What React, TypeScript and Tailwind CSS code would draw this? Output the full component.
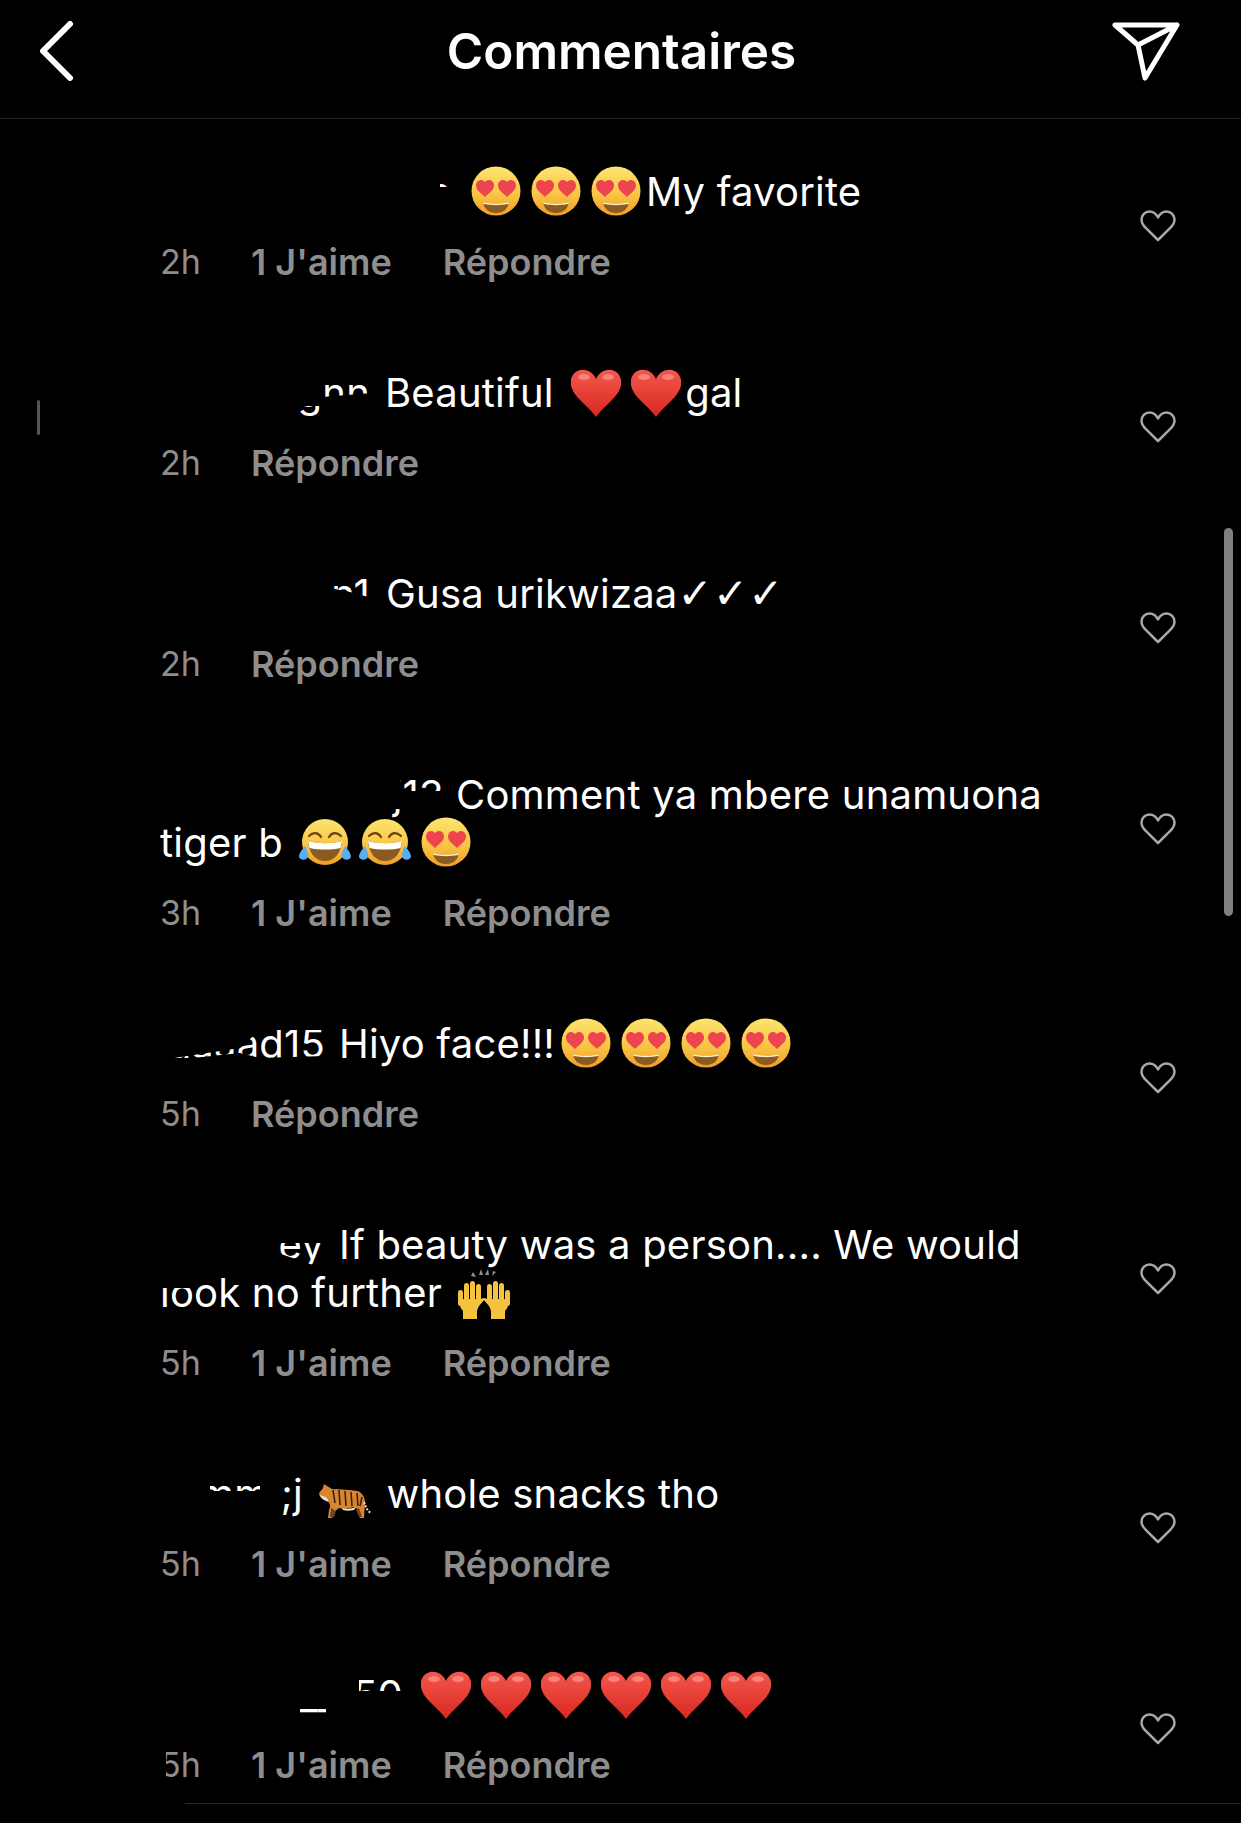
import React from "react";

type EmojiProps = { className?: string };

const HeartEyes = ({ className = "mr-[10px]" }: EmojiProps) => (
  <svg viewBox="0 0 50 50" className={`inline-block w-[50px] h-[50px] -my-2 align-[-2px] ${className}`}>
    <defs>
      <linearGradient id="faceFill" x1="0" y1="0" x2="0" y2="1">
        <stop offset="0%" stopColor="#fce56f" />
        <stop offset="60%" stopColor="#f9c242" />
        <stop offset="100%" stopColor="#ef9d27" />
      </linearGradient>
    </defs>
    <circle cx="25" cy="25" r="24.500" fill="url(#faceFill)" />
    <path d="M14 16c-3-4-9-2-9 3.500 0 5 6 8 9 11.500 3-3.500 9-6.500 9-11.500 0-5.500-6-7.500-9-3.500z" fill="#ee4450" />
    <path d="M36 16c-3-4-9-2-9 3.500 0 5 6 8 9 11.500 3-3.500 9-6.500 9-11.500 0-5.500-6-7.500-9-3.500z" fill="#ee4450" />
    <path d="M12 36c8 2 18 2 26 0-1 7-6 11-13 11s-12-4-13-11z" fill="#8a5a20" />
    <path d="M12 36c8 2 18 2 26 0l-.5 2c-8 1.500-17 1.500-25 0z" fill="#fff3c9" />
  </svg>
);

const JoyFace = ({ className = "" }: EmojiProps) => (
  <svg viewBox="0 0 54 50" className={`inline-block w-[54px] h-[50px] mr-[6px] -my-2 align-[-2px] ${className}`}>
    <circle cx="27" cy="25" r="23" fill="url(#faceFill)" />
    <path d="M11 19c4-4 9-4 12 1M31 20c3-5 8-5 12-1" fill="none" stroke="#6b4314" strokeWidth="2.200" strokeLinecap="round" />
    <path d="M10 24c10 3 24 3 34 0-1 13-8 20-17 20s-16-7-17-20z" fill="#8a5a20" />
    <path d="M10 24c10 3 24 3 34 0l-1.500 7c-9 2-22 2-31 0z" fill="#ffffff" />
    <path d="M7 29c-3 4-6 7-6 11 1 3 7 4 9 0 1-3-1-7-3-11zM47 29c3 4 6 7 6 11-1 3-7 4-9 0-1-3 1-7 3-11z" fill="#5aaef0" />
  </svg>
);

const RedHeart = ({ className = "mr-[10px]" }: EmojiProps) => (
  <svg viewBox="0 0 50 48" className={`inline-block w-[50px] h-[48px] -my-2 align-[-2px] ${className}`}>
    <defs>
      <linearGradient id="heartFill" x1="0" y1="0" x2="0" y2="1">
        <stop offset="0%" stopColor="#f4574d" />
        <stop offset="100%" stopColor="#d8281f" />
      </linearGradient>
    </defs>
    <path d="M25 10C22 3 15 0 9 1 2 3-1 9 0 16c1 6 5 11 10 16 5 5 11 10 15 16 4-6 10-11 15-16 5-5 9-10 10-16 1-7-2-13-9-15-6-1-13 2-16 9z" fill="url(#heartFill)" />
    <ellipse cx="13" cy="8" rx="6" ry="3" fill="#fa9a90" opacity="0.700" />
    <ellipse cx="37" cy="8" rx="6" ry="3" fill="#fa9a90" opacity="0.700" />
  </svg>
);

const RaisedHands = () => (
  <svg viewBox="0 0 54 50" className="inline-block w-[54px] h-[50px] ml-[4px] -my-2 align-[-4px]">
    <path d="M16 3l3 5-5-1zM24 0l2 6-4 0zM31 0l1 6-4 0zM39 3l-4 4 1-5z" fill="#8f8f8f" />
    <g fill="#f5c23e">
      <rect x="1" y="21" width="5" height="16" rx="2.500" />
      <rect x="7" y="14" width="5" height="20" rx="2.500" />
      <rect x="13" y="12" width="5" height="20" rx="2.500" />
      <rect x="19" y="15" width="5" height="18" rx="2.500" />
      <path d="M2 30h22l2-1 2 1-6 7c-1 2-2 4-2 6v7H6v-8c-3-3-4-8-4-12z" />
    </g>
    <g fill="#f5c23e" transform="translate(54 0) scale(-1 1)">
      <rect x="1" y="21" width="5" height="16" rx="2.500" />
      <rect x="7" y="14" width="5" height="20" rx="2.500" />
      <rect x="13" y="12" width="5" height="20" rx="2.500" />
      <rect x="19" y="15" width="5" height="18" rx="2.500" />
      <path d="M2 30h22l2-1 2 1-6 7c-1 2-2 4-2 6v7H6v-8c-3-3-4-8-4-12z" />
    </g>
  </svg>
);

const Tiger = () => (
  <svg viewBox="0 0 54 34" className="inline-block w-[54px] h-[34px] -my-2 align-[-2px]">
    <path d="M1 9l4-5 1-4 3 2 5 3c9 0 18 1 25 2 5 1 8 6 8 12l-1 15h-4l-2-9-5-2c-5 2-9 2-14 1l-5 4-2 6h-4l1-8c2-3 1-6-1-9-3-1-7-3-9-8z" fill="#d9852f" />
    <path d="M1 10c2 2 5 2 8 4l2 4c-4-1-8-3-10-8zM24 24c5 1 9 1 14-1l-2 3c-4 1-8 1-11 0z" fill="#eee0c6" />
    <path d="M15 6l2 13M21 6l1 15M27 7l1 15M33 8l1 14M39 9l1 13M44 13l-2 9" stroke="#3a2211" strokeWidth="1.600" fill="none" />
    <path d="M46 18c2 5 3 9 7 11" stroke="#e8dcc6" strokeWidth="2" fill="none" strokeDasharray="2 1.500" />
    <path d="M13 24l-1 9h4l2-6zM41 24l3 9h-3l-3-7z" fill="#6a4624" />
  </svg>
);

const HeartOutline = () => (
  <svg viewBox="0 0 36 32" className="w-9 h-8 fill-none stroke-[#a8a8a8] stroke-[2.500]">
    <path d="M18 7.500C16 3.500 13 1.500 9.500 1.500 5 1.500 1.500 5 1.500 9.700c0 3.400 1.800 5.800 4.500 8.500L18 30l12-11.800c2.700-2.700 4.500-5.100 4.500-8.500 0-4.700-3.500-8.200-8-8.200-3.500 0-6.500 2-8.500 6z" strokeLinejoin="round" />
  </svg>
);

const Meta = ({ time, liked, cutTime }: { time: string; liked?: boolean; cutTime?: boolean }) => (
  <div className="flex gap-[51px] mt-[22px] h-12 leading-[48px] text-[36px] text-[#8e8e8e]">
    <span className={cutTime ? "w-[40px] text-[34px] [clip-path:inset(0_0_0_6px)]" : "w-[40px] text-[34px]"}>{time}</span>
    {liked && <span className="font-semibold">1 J'aime</span>}
    <span className="font-semibold">Répondre</span>
  </div>
);

const Row = ({ children, time, liked, cutTime, last }: { children: React.ReactNode; time: string; liked?: boolean; cutTime?: boolean; last?: boolean }) => (
  <div className={last ? "flex items-start pl-[160px] pt-11 pb-[14px]" : "flex items-start pl-[160px] pt-11 pb-[39px]"}>
    <div className="w-[900px] shrink-0">
      <p className="leading-[48px] text-[40px] tracking-[0.2px] text-white">{children}</p>
      <Meta time={time} liked={liked} cutTime={cutTime} />
    </div>
    <div className="ml-[80px] mt-[42px]">
      <HeartOutline />
    </div>
  </div>
);

export default function App() {
  return (
    <div className="relative h-[1823px] overflow-hidden bg-black font-['Inter',sans-serif]">
      <header className="flex items-center h-[119px] pl-[37px] pr-[60px] border-b border-[#262626]">
        <svg viewBox="0 0 38 60" className="w-[38px] h-[60px] fill-none stroke-white stroke-[6] -mt-4" strokeLinecap="round" strokeLinejoin="round">
          <path d="M33 3 6 30l27 27" />
        </svg>
        <h1 className="flex-1 pl-[57px] text-center text-[49.5px] font-semibold text-white -mt-4">Commentaires</h1>
        <svg viewBox="0 0 70 60" className="w-[70px] h-[60px] fill-none stroke-white stroke-[5] -mt-4" strokeLinejoin="round" strokeLinecap="round">
          <path d="M4 4h62L34 57 27 24 4 4zM27 24 66 4" />
        </svg>
      </header>

      <main className="pt-[5px]">
        <Row time="2h" liked>
          {/* redacted usernames: only slivers of the text are left */}
          <span className="inline-block w-[311px] text-right whitespace-nowrap pr-[20px] [clip-path:polygon(280px_14px,292px_14px,292px_19px,280px_19px)]">ann</span>
          <HeartEyes />
          <HeartEyes />
          <HeartEyes className="mr-[5px]" />
          My favorite
        </Row>
        <Row time="2h">
          <span className="inline-block w-[225px] text-right whitespace-nowrap pr-[15px] [clip-path:polygon(162px_0,212px_0,212px_24px,162px_28px,162px_37px,162px_48px,138px_48px,138px_37px,162px_37px)]">gnn</span>
          Beautiful <RedHeart className="ml-[6px] mr-[10px]" />
          <RedHeart className="mr-[4px]" />
          gal
        </Row>
        <Row time="2h">
          <span className="inline-block w-[226px] text-right whitespace-nowrap pr-[16px] [clip-path:polygon(170px_0,212px_0,212px_28px,190px_22px,170px_18px)]">an1</span>
          Gusa urikwizaa<span className="font-['DejaVu_Sans',sans-serif] text-[42px] leading-none">✓✓✓</span>
        </Row>
        <Row time="3h" liked>
          <span className="inline-block w-[296px] text-right whitespace-nowrap pr-[12px] [clip-path:polygon(240px_0,290px_0,290px_20px,240px_20px,240px_38px,216px_38px,216px_48px,240px_48px,240px_20px)]">j13</span>
          Comment ya mbere unamuona tiger b <JoyFace className="ml-[4px]" />
          <JoyFace />
          <HeartEyes className="ml-[3px]" />
        </Row>
        <Row time="5h">
          <span className="inline-block w-[179px] text-right whitespace-nowrap pr-[14px] [clip-path:polygon(14px_38px,80px_28px,100px_10px,165px_10px,165px_36px,100px_38px,80px_33px,14px_40px)]">aaaad15</span>
          Hiyo face!!!
          <HeartEyes className="ml-[6px] mr-[10px]" />
          <HeartEyes />
          <HeartEyes />
          <HeartEyes />
        </Row>
        <Row time="5h" liked>
          <span className="inline-block w-[179px] text-right whitespace-nowrap pr-[15px] [clip-path:polygon(118px_22px,165px_22px,165px_48px,118px_32px)]">ey</span>
          If beauty was a person.... We would{" "}
          <span className="inline-block [clip-path:inset(19px_0_0_0)]">lo</span>ok no further <RaisedHands />
        </Row>
        <Row time="5h" liked>
          <span className="inline-block w-[158px] text-right whitespace-nowrap pr-[15px] [clip-path:polygon(50px_16px,100px_16px,100px_21px,120px_21px,120px_0,150px_0,150px_48px,120px_48px,120px_21px,50px_21px)]">mm ;j</span>
          <Tiger /> <span className="ml-[3px]">whole snacks tho</span>
        </Row>
        <Row time="5h" liked cutTime last>
          <span className="inline-block w-[261px] text-right whitespace-nowrap pr-[18px] [clip-path:polygon(199px_6px,243px_6px,243px_20px,199px_20px,199px_38px,140px_38px,140px_48px,166px_48px,166px_38px,199px_38px)]">___50</span>
          <RedHeart />
          <RedHeart />
          <RedHeart />
          <RedHeart />
          <RedHeart />
          <RedHeart />
        </Row>
        <div className="ml-[185px] border-t border-[#262626]" />
      </main>

      <div className="absolute left-[37px] top-[400px] w-[3px] h-[35px] rounded-full bg-[#555555]" />
      <div className="absolute right-[8px] top-[528px] w-[9px] h-[388px] rounded-full bg-[#808080]" />
    </div>
  );
}
